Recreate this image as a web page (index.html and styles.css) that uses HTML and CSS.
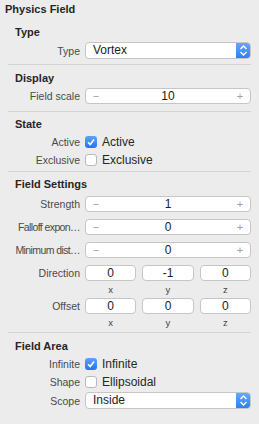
FILE: index.html
```html
<!DOCTYPE html>
<html lang="en">
<head>
    <meta charset="UTF-8">
    <meta name="viewport" content="width=device-width, initial-scale=1.0">
    <title>Physics Field</title>
    <link rel="stylesheet" href="styles.css">
</head>
<body>

    <div class="inspector">
        <h1 class="panel-title">Physics Field</h1>

        <section class="group group-type">
            <h2 class="group-title">Type</h2>
            <div class="row row-popup">
                <span class="row-label">Type</span>
                <div class="popup">
                    <span class="popup-value">Vortex</span>
                    <span class="popup-arrows">
                        <svg width="15" height="17" viewBox="0 0 15 17">
                            <polyline points="4.5,7 7.5,4 10.5,7" fill="none" stroke="#fff" stroke-width="1.4"/>
                            <polyline points="4.5,10 7.5,13 10.5,10" fill="none" stroke="#fff" stroke-width="1.4"/>
                        </svg>
                    </span>
                </div>
            </div>
        </section>

        <section class="group group-display">
            <h2 class="group-title">Display</h2>
            <div class="row">
                <span class="row-label">Field scale</span>
                <div class="stepper">
                    <span class="step-btn">&minus;</span>
                    <span class="step-value">10</span>
                    <span class="step-btn">+</span>
                </div>
            </div>
        </section>

        <section class="group group-state">
            <h2 class="group-title">State</h2>
            <div class="row row-check">
                <span class="row-label">Active</span>
                <label class="check">
                    <span class="check-box checked">
                        <svg width="12" height="12" viewBox="0 0 12 12">
                            <polyline points="3,6.2 5.2,8.5 9,3.5" fill="none" stroke="#fff" stroke-width="1.6"/>
                        </svg>
                    </span>
                    Active
                </label>
            </div>
            <div class="row row-check">
                <span class="row-label">Exclusive</span>
                <label class="check">
                    <span class="check-box"></span>
                    Exclusive
                </label>
            </div>
        </section>

        <section class="group group-settings">
            <h2 class="group-title">Field Settings</h2>
            <div class="row row-step">
                <span class="row-label">Strength</span>
                <div class="stepper">
                    <span class="step-btn">&minus;</span>
                    <span class="step-value">1</span>
                    <span class="step-btn">+</span>
                </div>
            </div>
            <div class="row row-step">
                <span class="row-label label-cut">Falloff expon…</span>
                <div class="stepper">
                    <span class="step-btn">&minus;</span>
                    <span class="step-value">0</span>
                    <span class="step-btn">+</span>
                </div>
            </div>
            <div class="row row-step">
                <span class="row-label label-cut">Minimum dist…</span>
                <div class="stepper">
                    <span class="step-btn">&minus;</span>
                    <span class="step-value">0</span>
                    <span class="step-btn">+</span>
                </div>
            </div>
            <div class="row row-vector">
                <span class="row-label">Direction</span>
                <div class="vector">
                    <div class="axis"><div class="axis-field">0</div><div class="axis-name">x</div></div>
                    <div class="axis"><div class="axis-field">-1</div><div class="axis-name">y</div></div>
                    <div class="axis"><div class="axis-field">0</div><div class="axis-name">z</div></div>
                </div>
            </div>
            <div class="row row-vector">
                <span class="row-label">Offset</span>
                <div class="vector">
                    <div class="axis"><div class="axis-field">0</div><div class="axis-name">x</div></div>
                    <div class="axis"><div class="axis-field">0</div><div class="axis-name">y</div></div>
                    <div class="axis"><div class="axis-field">0</div><div class="axis-name">z</div></div>
                </div>
            </div>
        </section>

        <section class="group group-area">
            <h2 class="group-title">Field Area</h2>
            <div class="row row-check">
                <span class="row-label">Infinite</span>
                <label class="check">
                    <span class="check-box checked">
                        <svg width="12" height="12" viewBox="0 0 12 12">
                            <polyline points="3,6.2 5.2,8.5 9,3.5" fill="none" stroke="#fff" stroke-width="1.6"/>
                        </svg>
                    </span>
                    Infinite
                </label>
            </div>
            <div class="row row-check">
                <span class="row-label">Shape</span>
                <label class="check">
                    <span class="check-box"></span>
                    Ellipsoidal
                </label>
            </div>
            <div class="row row-popup">
                <span class="row-label">Scope</span>
                <div class="popup">
                    <span class="popup-value">Inside</span>
                    <span class="popup-arrows">
                        <svg width="15" height="17" viewBox="0 0 15 17">
                            <polyline points="4.5,7 7.5,4 10.5,7" fill="none" stroke="#fff" stroke-width="1.4"/>
                            <polyline points="4.5,10 7.5,13 10.5,10" fill="none" stroke="#fff" stroke-width="1.4"/>
                        </svg>
                    </span>
                </div>
            </div>
        </section>
    </div>

</body>
</html>
```

FILE: styles.css
```css
/* Reset */
* {
    box-sizing: border-box;
    margin: 0;
    padding: 0;
}

body {
    font-family: "Liberation Sans", Arial, sans-serif;
    font-size: 11px;
    background-color: #ececec;
    color: #262626;
}

.inspector {
    width: 259px;
    padding: 0 8px;
}

.panel-title {
    font-size: 11px;
    font-weight: bold;
    line-height: 18px;
    margin-left: -3px;
    margin-bottom: 5px;
}

/* Groups */
.group {
    border-bottom: 1px solid #d3d3d3;
}

.group-title {
    font-size: 11px;
    font-weight: bold;
    line-height: 18px;
    padding-left: 7px;
    margin-bottom: 1px;
}

.group-type {
    padding-bottom: 5px;
}

.group-display {
    padding-top: 4px;
    padding-bottom: 7px;
}

.group-state {
    padding-top: 3px;
    padding-bottom: 2px;
}

.group-state .group-title {
    margin-bottom: 0;
}

.group-settings {
    padding-top: 3px;
    padding-bottom: 1px;
}

.group-settings .group-title {
    margin-bottom: 3px;
}

.group-area {
    padding-top: 4px;
    border-bottom: none;
}

.group-area .group-title {
    margin-bottom: 0;
}

/* Rows */
.row {
    display: grid;
    grid-template-columns: 72px 1fr;
    column-gap: 5px;
    align-items: center;
    height: 16px;
}

.row-label {
    display: flex;
    justify-content: flex-end;
    font-size: 10.5px;
    color: #4a4a4a;
    white-space: nowrap;
}

.label-cut {
    letter-spacing: -0.6px;
}

.row-popup {
    height: 17px;
}

.group-area .row-popup {
    margin-top: 1px;
}

.row-check {
    height: 18px;
}

.row-step {
    margin-bottom: 7px;
}

.row-vector {
    height: 33px;
    align-items: start;
}

.row-vector .row-label {
    line-height: 16px;
}

/* Popup button */
.popup {
    display: flex;
    height: 17px;
    background-color: #fff;
    border: 1px solid #c6c6c6;
    border-radius: 4px;
    overflow: hidden;
}

.popup-value {
    flex: 1;
    padding-left: 7px;
    line-height: 15px;
    font-size: 12px;
    color: #222;
}

.popup-arrows {
    width: 15px;
    margin: -1px -1px -1px 0;
    background: linear-gradient(#6aaaf9, #2a7ef2);
    border-radius: 0 4px 4px 0;
    display: flex;
    align-items: center;
    justify-content: center;
}

/* Stepper */
.stepper {
    display: flex;
    align-items: center;
    height: 16px;
    background-color: #fff;
    border: 1px solid #c6c6c6;
    border-radius: 4px;
    padding: 0 6px;
}

.step-btn {
    color: #a0a0a0;
    font-size: 11px;
    width: 8px;
    text-align: center;
}

.step-value {
    flex: 1;
    text-align: center;
    font-size: 12px;
    color: #222;
}

/* Checkbox */
.check {
    display: flex;
    align-items: center;
    gap: 5px;
    font-size: 12px;
    color: #262626;
}

.check-box {
    width: 12px;
    height: 12px;
    border: 1px solid #b8b8b8;
    border-radius: 3px;
    background-color: #fff;
    display: flex;
}

.check-box.checked {
    border: none;
    background: linear-gradient(#5ea3fb, #1f76f1);
}

/* Vector fields */
.vector {
    display: grid;
    grid-template-columns: repeat(3, 1fr);
    column-gap: 6px;
}

.axis-field {
    height: 16px;
    background-color: #fff;
    border: 1px solid #c6c6c6;
    border-radius: 4px;
    text-align: center;
    line-height: 14px;
    font-size: 12px;
    color: #222;
}

.axis-name {
    text-align: center;
    font-size: 9.5px;
    line-height: 17px;
    color: #444;
}
```
